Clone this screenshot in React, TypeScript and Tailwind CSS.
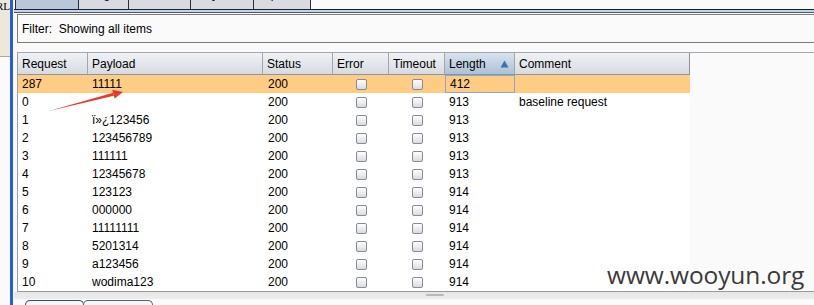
import React from "react";

const rows: [string, string, string, string, string][] = [
  ["287", "11111", "200", "412", ""],
  ["0", "", "200", "913", "baseline request"],
  ["1", "ï»¿123456", "200", "913", ""],
  ["2", "123456789", "200", "913", ""],
  ["3", "111111", "200", "913", ""],
  ["4", "12345678", "200", "913", ""],
  ["5", "123123", "200", "914", ""],
  ["6", "000000", "200", "914", ""],
  ["7", "11111111", "200", "914", ""],
  ["8", "5201314", "200", "914", ""],
  ["9", "a123456", "200", "914", ""],
  ["10", "wodima123", "200", "914", ""],
];

function Checkbox() {
  return (
    <div className="w-[11px] h-[11px] rounded-[2px] border border-[#878b93] bg-linear-to-b from-[#ffffff] to-[#d8dbe0]" />
  );
}

const topTabs = [
  { label: "Results", w: "w-[64px]", sel: true },
  { label: "Target", w: "w-[51px]", sel: false },
  { label: "Positions", w: "w-[63px]", sel: false },
  { label: "Payloads", w: "w-[64px]", sel: false },
  { label: "Options", w: "w-[58px]", sel: false },
];

export default function App() {
  return (
    <div
      className="relative w-[814px] h-[305px] overflow-hidden bg-[#fafafa] flex text-[12px] text-black"
      style={{ fontFamily: '"Liberation Sans", Arial, sans-serif' }}
    >
      {/* left strip */}
      <div className="w-[10px] shrink-0 flex flex-col">
        <div className="h-[57px] shrink-0 bg-[#ece9d8] border-b border-[#a8a89c] overflow-hidden flex justify-end">
          <span
            className="text-[11px] leading-[14px] mt-[-1px] whitespace-nowrap"
            style={{ fontFamily: '"Liberation Serif", serif' }}
          >
            URL
          </span>
        </div>
        <div className="flex-1 bg-[#fafafa]" />
      </div>
      <div className="w-[3px] shrink-0 bg-[#2b5bd6]" />

      {/* main */}
      <div className="flex-1 flex flex-col">
        {/* top tabs */}
        <div className="h-[9px] shrink-0 overflow-hidden flex pl-[2px]">
          {topTabs.map((t) => (
            <div
              key={t.label}
              className={`${t.w} h-[22px] shrink-0 -mt-[13px] border-l border-r border-[#2a2e3a] -mr-px flex justify-center ${
                t.sel ? "bg-[#b9c7d8]" : "bg-[#d9dbe1]"
              }`}
            >
              <span className="leading-[14px]">{t.label}</span>
            </div>
          ))}
        </div>
        <div className="h-px shrink-0 ml-px bg-[#1c2130]" />
        <div className="h-[2px] shrink-0 ml-px bg-[#c3d3e8]" />
        <div className="h-px shrink-0 ml-px bg-[#4a5874]" />
        <div className="h-px shrink-0" />

        {/* filter */}
        <div className="ml-[4px] h-[29px] shrink-0 border border-r-0 border-[#7d7d70] bg-[#fafafa] flex items-center pl-[4px]">
          <span className="whitespace-pre">Filter:  Showing all items</span>
        </div>
        <div className="h-[9px] shrink-0" />

        {/* table */}
        <div className="ml-[4px] shrink-0 border-t border-[#a3a7ae] flex flex-col">
          <div className="flex border-l border-[#9a9ea6]">
            <div className="w-[672px] flex h-[22px] border-b border-[#8d95a3]">
              {[
                ["Request", "w-[70px]"],
                ["Payload", "w-[175px]"],
                ["Status", "w-[70px]"],
                ["Error", "w-[56px]"],
                ["Timeout", "w-[56px]"],
              ].map(([l, w]) => (
                <div
                  key={l}
                  className={`${w} border-r border-[#a2a6ad] bg-linear-to-b from-[#f0f2f5] to-[#d7dbe1] flex items-center pl-[4px]`}
                >
                  {l}
                </div>
              ))}
              <div className="w-[70px] border-r border-[#a2a6ad] bg-linear-to-b from-[#d8e3ee] to-[#adc1d6] flex items-center pl-[4px] pr-[5px] justify-between">
                <span>Length</span>
                <svg width="9" height="8" viewBox="0 0 9 8">
                  <polygon points="4.5,0.5 8.5,7.5 0.5,7.5" fill="#3f72ad" />
                </svg>
              </div>
              <div className="w-[175px] border-r border-[#8e929a] bg-linear-to-b from-[#f0f2f5] to-[#d7dbe1] flex items-center pl-[4px]">
                Comment
              </div>
            </div>
            <div className="flex-1" />
          </div>

          <div className="flex border-l border-[#9a9ea6]">
            <div className="w-[672px] flex flex-col">
              {rows.map((r, i) => {
                const sel = i === 0;
                return (
                  <div
                    key={i}
                    className={`h-[18px] shrink-0 flex items-center ${sel ? "bg-[#fecc82]" : "bg-white"}`}
                  >
                    <div className="w-[70px] pl-[4px]">{r[0]}</div>
                    <div className="w-[175px] pl-[4px] whitespace-pre">{r[1]}</div>
                    <div className="w-[70px] pl-[5px]">{r[2]}</div>
                    <div className="w-[56px] flex justify-center pl-[1px]">
                      <Checkbox />
                    </div>
                    <div className="w-[56px] flex justify-center pl-[1px]">
                      <Checkbox />
                    </div>
                    <div
                      className={`w-[70px] h-[18px] flex items-center pl-[4px] ${
                        sel ? "border border-[#86a9cf]" : ""
                      }`}
                    >
                      {r[3]}
                    </div>
                    <div className="w-[175px] pl-[4px]">{r[4]}</div>
                  </div>
                );
              })}
            </div>
            <div className="flex-1" />
          </div>
          <div className="h-px bg-[#9a9a9a]" />
        </div>

        {/* bottom scroll strip */}
        <div className="h-[7px] shrink-0 ml-px bg-linear-to-b from-[#e6e6e6] to-[#ececec] relative">
          <div className="absolute left-[412px] top-[2px] w-[18px] h-[2px] rounded-[1px] bg-[#b8b8b8]" />
        </div>
        <div className="h-[12px] shrink-0 flex pl-[12px] pt-[1px]">
          <div className="w-[59px] h-[12px] rounded-t-[5px] border border-b-0 border-[#3a4a64] bg-[#f4f6f8]" />
          <div className="w-[70px] h-[12px] -ml-px rounded-t-[5px] border border-b-0 border-[#56627a] bg-[#f6f6f6]" />
        </div>
      </div>

      {/* red annotation arrow */}
      <svg
        className="absolute left-0 top-0 pointer-events-none"
        width="814"
        height="305"
        viewBox="0 0 814 305"
      >
        <polygon points="48,111.2 113.9,95.8 113.1,92.8" fill="#e83a2e" />
        <polygon points="123,92 114.6,98.6 112.3,89.8" fill="#e83a2e" />
      </svg>

      {/* watermark */}
      <div
        className="absolute left-[607px] top-[260px] text-[24.5px] leading-[30px] text-[#3a3a3a] tracking-[-0.1px]"
        style={{ fontFamily: '"Open Sans", sans-serif' }}
      >
        www.wooyun.org
      </div>
    </div>
  );
}
